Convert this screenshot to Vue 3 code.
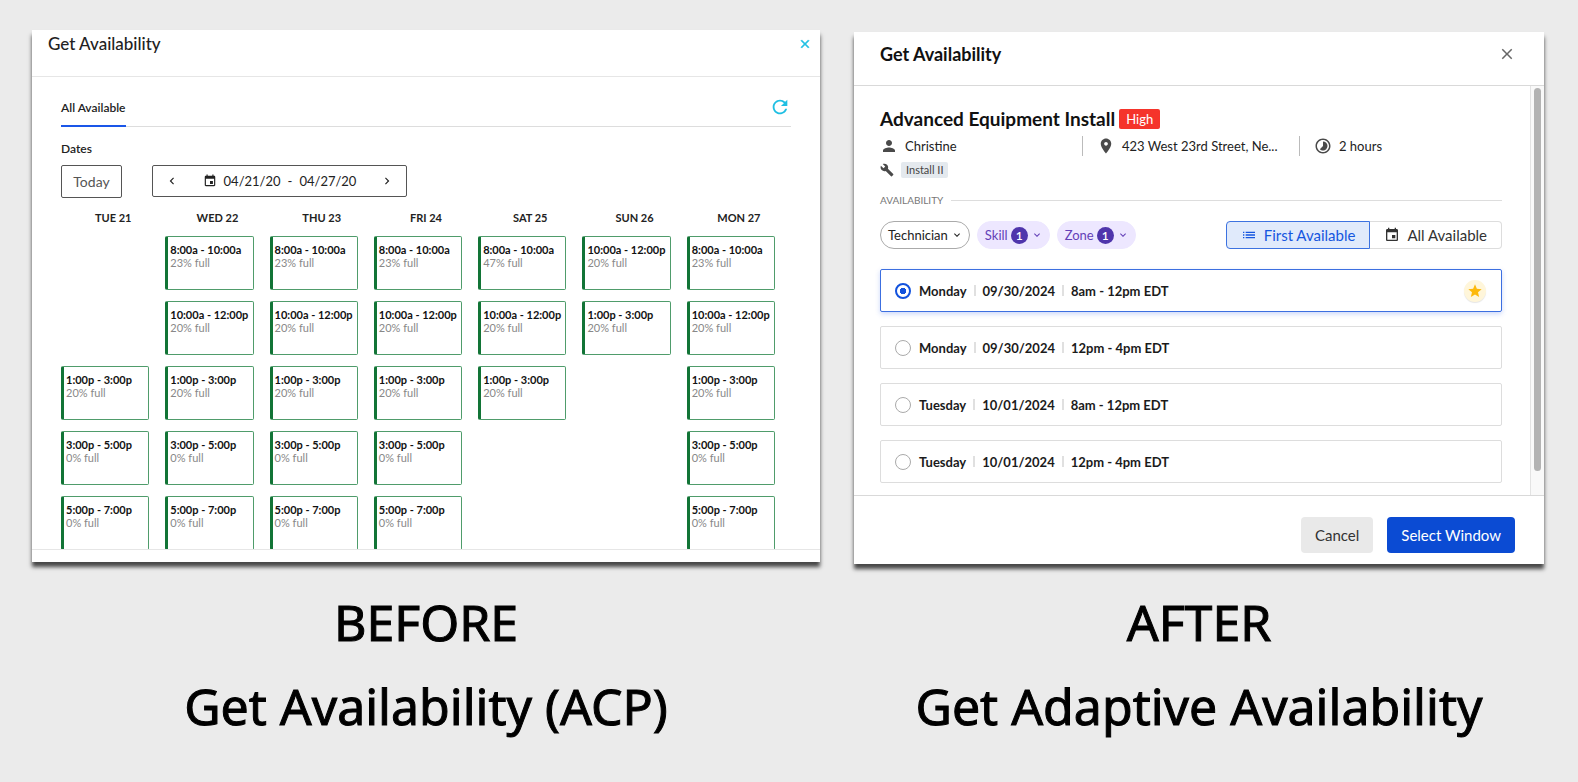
<template>
  <main class="compare">
    <section class="side before">
      <div class="panel">
        <header class="panel-header">
          <h2>Get Availability</h2>
          <button class="icon-button cyan" aria-label="Close">
            <svg viewBox="0 0 24 24" class="icon-14 bold"><path :d="icons.close" /></svg>
          </button>
        </header>

        <div class="panel-body">
          <div class="tabs">
            <button class="tab">All Available</button>
            <button class="icon-button cyan refresh" aria-label="Refresh">
              <svg viewBox="0 0 24 24" class="icon-22"><path :d="icons.refresh" /></svg>
            </button>
          </div>

          <p class="dates-label">Dates</p>
          <div class="dates">
            <button class="today">Today</button>
            <div class="range">
              <button class="icon-button" aria-label="Previous week">
                <svg viewBox="0 0 24 24" class="icon-14"><path :d="icons.left" /></svg>
              </button>
              <div class="range-text">
                <svg viewBox="0 0 24 24" class="icon-14"><path :d="icons.event" /></svg>
                <span>04/21/20</span>
                <span>-</span>
                <span>04/27/20</span>
              </div>
              <button class="icon-button" aria-label="Next week">
                <svg viewBox="0 0 24 24" class="icon-14"><path :d="icons.right" /></svg>
              </button>
            </div>
          </div>

          <div class="calendar">
            <div v-for="day in days" :key="day.name" class="day">
              <h3>{{ day.name }}</h3>
              <template v-for="(slot, index) in day.slots" :key="index">
                <button v-if="slot" class="slot">
                  <strong>{{ slot[0] }}</strong>
                  <span>{{ slot[1] }}% full</span>
                </button>
                <div v-else class="slot-empty"></div>
              </template>
            </div>
          </div>
        </div>
        <footer class="panel-footer"></footer>
      </div>
      <div class="caption">
        <p>BEFORE</p>
        <p>Get Availability (ACP)</p>
      </div>
    </section>

    <section class="side after">
      <div class="panel">
        <header class="panel-header">
          <h2>Get Availability</h2>
          <button class="icon-button gray" aria-label="Close">
            <svg viewBox="0 0 24 24" class="icon-18"><path :d="icons.close" /></svg>
          </button>
        </header>

        <div class="panel-body">
          <div class="content">
            <div class="job-title">
              <h3>Advanced Equipment Install</h3>
              <span class="priority">High</span>
            </div>
            <div class="job-info">
              <div class="info person">
                <svg viewBox="0 0 24 24" class="icon-18"><path :d="icons.person" /></svg>
                <span>Christine</span>
              </div>
              <div class="info place">
                <svg viewBox="0 0 24 24" class="icon-18"><path :d="icons.place" /></svg>
                <span>423 West 23rd Street, Ne...</span>
              </div>
              <div class="info duration">
                <svg viewBox="0 0 24 24" class="icon-18"><path :d="icons.timelapse" /></svg>
                <span>2 hours</span>
              </div>
            </div>
            <div class="job-skill">
              <svg viewBox="0 0 24 24" class="icon-14"><path :d="icons.build" /></svg>
              <span>Install II</span>
            </div>

            <div class="divider">AVAILABILITY</div>

            <div class="toolbar">
              <div class="filters">
                <button
                  v-for="filter in filters"
                  :key="filter.name"
                  :class="['filter', { applied: filter.count }]"
                  aria-haspopup="listbox"
                >
                  {{ filter.name }}
                  <span v-if="filter.count" class="count">{{ filter.count }}</span>
                  <svg viewBox="0 0 24 24" class="icon-12"><path :d="icons.down" /></svg>
                </button>
              </div>
              <div class="views">
                <button
                  v-for="view in views"
                  :key="view.name"
                  :class="['view', { active: activeView === view.name }]"
                  @click="activeView = view.name"
                >
                  <svg viewBox="0 0 24 24" class="icon-16"><path :d="icons[view.icon]" /></svg>
                  {{ view.name }}
                </button>
              </div>
            </div>

            <div class="options">
              <label
                v-for="(option, index) in options"
                :key="index"
                :class="['option', { selected: selected === index }]"
              >
                <input v-model="selected" type="radio" name="window" :value="index" />
                <span>{{ option.day }}</span>
                <i></i>
                <span>{{ option.date }}</span>
                <i></i>
                <span>{{ option.time }}</span>
                <span v-if="option.best" class="star">
                  <svg viewBox="0 0 24 24" class="icon-16"><path :d="icons.star" /></svg>
                </span>
              </label>
            </div>
          </div>
          <div class="scrollbar"><div class="thumb"></div></div>
        </div>

        <footer class="panel-footer">
          <button class="action">Cancel</button>
          <button class="action primary">Select Window</button>
        </footer>
      </div>
      <div class="caption">
        <p>AFTER</p>
        <p>Get Adaptive Availability</p>
      </div>
    </section>
  </main>
</template>

<script setup>
import { ref } from 'vue'

const morning = ['8:00a - 10:00a', 23]
const noon = ['10:00a - 12:00p', 20]
const afternoon = ['1:00p - 3:00p', 20]
const late = ['3:00p - 5:00p', 0]
const evening = ['5:00p - 7:00p', 0]
const fullDay = [morning, noon, afternoon, late, evening]

const days = [
  { name: 'TUE 21', slots: [null, null, afternoon, late, evening] },
  { name: 'WED 22', slots: fullDay },
  { name: 'THU 23', slots: fullDay },
  { name: 'FRI 24', slots: fullDay },
  { name: 'SAT 25', slots: [['8:00a - 10:00a', 47], noon, afternoon] },
  { name: 'SUN 26', slots: [noon, afternoon] },
  { name: 'MON 27', slots: fullDay }
]

const filters = [
  { name: 'Technician', count: 0 },
  { name: 'Skill', count: 1 },
  { name: 'Zone', count: 1 }
]

const views = [
  { name: 'First Available', icon: 'list' },
  { name: 'All Available', icon: 'event' }
]
const activeView = ref('First Available')

const options = [
  { day: 'Monday', date: '09/30/2024', time: '8am - 12pm EDT', best: true },
  { day: 'Monday', date: '09/30/2024', time: '12pm - 4pm EDT' },
  { day: 'Tuesday', date: '10/01/2024', time: '8am - 12pm EDT' },
  { day: 'Tuesday', date: '10/01/2024', time: '12pm - 4pm EDT' }
]
const selected = ref(0)

const icons = {
  close: 'M19 6.41L17.59 5 12 10.59 6.41 5 5 6.41 10.59 12 5 17.59 6.41 19 12 13.41 17.59 19 19 17.59 13.41 12z',
  refresh: 'M17.65 6.35C16.2 4.9 14.21 4 12 4c-4.42 0-7.99 3.58-7.99 8s3.57 8 7.99 8c3.73 0 6.84-2.55 7.73-6h-2.08c-.82 2.33-3.04 4-5.65 4-3.31 0-6-2.69-6-6s2.69-6 6-6c1.66 0 3.14.69 4.22 1.78L13 11h7V4l-2.35 2.35z',
  left: 'M15.41 7.41L14 6l-6 6 6 6 1.41-1.41L10.83 12z',
  right: 'M10 6L8.59 7.41 13.17 12l-4.58 4.59L10 18l6-6z',
  down: 'M7.41 8.59L12 13.17l4.59-4.58L18 10l-6 6-6-6z',
  event: 'M17 12h-5v5h5v-5zM16 1v2H8V1H6v2H5c-1.11 0-1.99.9-1.99 2L3 19c0 1.1.89 2 2 2h14c1.1 0 2-.9 2-2V5c0-1.1-.9-2-2-2h-1V1h-2zm3 18H5V8h14v11z',
  person: 'M12 12c2.21 0 4-1.79 4-4s-1.79-4-4-4-4 1.79-4 4 1.79 4 4 4zm0 2c-2.67 0-8 1.34-8 4v2h16v-2c0-2.66-5.33-4-8-4z',
  place: 'M12 2C8.13 2 5 5.13 5 9c0 5.25 7 13 7 13s7-7.75 7-13c0-3.87-3.13-7-7-7zm0 9.5c-1.38 0-2.5-1.12-2.5-2.5s1.12-2.5 2.5-2.5 2.5 1.12 2.5 2.5-1.12 2.5-2.5 2.5z',
  timelapse: 'M16.24 7.76C15.07 6.59 13.54 6 12 6v6l-4.24 4.24c2.34 2.34 6.14 2.34 8.49 0 2.34-2.34 2.34-6.14-.01-8.48zM12 2C6.48 2 2 6.48 2 12s4.48 10 10 10 10-4.48 10-10S17.52 2 12 2zm0 18c-4.42 0-8-3.58-8-8s3.58-8 8-8 8 3.58 8 8-3.58 8-8 8z',
  build: 'M22.7 19l-9.1-9.1c.9-2.3.4-5-1.5-6.9-2-2-5-2.4-7.4-1.3L9 6 6 9 1.6 4.7C.4 7.1.9 10.1 2.9 12.1c1.9 1.9 4.6 2.4 6.9 1.5l9.1 9.1c.4.4 1 .4 1.4 0l2.3-2.3c.5-.4.5-1.1.1-1.4z',
  list: 'M3 13h2v-2H3v2zm0 4h2v-2H3v2zm0-8h2V7H3v2zm4 4h14v-2H7v2zm0 4h14v-2H7v2zM7 7v2h14V7H7z',
  star: 'M12 17.27L18.18 21l-1.64-7.03L22 9.24l-7.19-.61L12 2 9.19 8.63 2 9.24l5.46 4.73L5.82 21z'
}
</script>

<style>
body {
  background: #ebebeb;
}
</style>

<style scoped>
.compare {
  display: grid;
  grid-template-columns: 788fr 690fr;
  gap: 34px;
  padding: 30px 34px 0 32px;
  font-family: Lato, sans-serif;
  color: #222;
}

.compare * {
  box-sizing: border-box;
}

h2,
h3,
p {
  margin: 0;
}

button {
  padding: 0;
  border: none;
  background: none;
  font: inherit;
  color: inherit;
  cursor: pointer;
}

svg {
  display: block;
  flex: none;
  fill: currentColor;
}

.icon-12 { width: 12px; height: 12px; }
.icon-14 { width: 14px; height: 14px; }
.icon-16 { width: 16px; height: 16px; }
.icon-18 { width: 18px; height: 18px; }
.icon-22 { width: 22px; height: 22px; }

.bold {
  stroke: currentColor;
  stroke-width: 1;
}

.cyan { color: #1fbfe3; }
.gray { color: #666; }

.side {
  min-width: 0;
}

.panel {
  background: #fff;
  box-shadow: 0 5px 4px rgba(0, 0, 0, 0.7);
}

.panel-header {
  display: flex;
  justify-content: space-between;
  border-bottom: 1px solid #e6e6e6;
}

.caption {
  padding-top: 18px;
  font-family: "Noto Sans", sans-serif;
  font-size: 50px;
  line-height: 84px;
  text-align: center;
  white-space: nowrap;
  color: #000;
  -webkit-text-stroke: 1px #000;
}

/* Before */
.before .panel-header {
  height: 47px;
  padding: 4px 8px 0 16px;
}

.before h2 {
  font-size: 17px;
  line-height: 20px;
  font-weight: 500;
}

.before .icon-button {
  align-self: flex-start;
}

.before .panel-header .icon-button {
  padding: 3px 0;
}

.before .panel-body {
  height: 472px;
  padding: 19px 29px 0;
  overflow: hidden;
}

.tabs {
  display: flex;
  justify-content: space-between;
  height: 31px;
  border-bottom: 1px solid #ddd;
}

.tab {
  height: 31px;
  padding-bottom: 6px;
  border-bottom: 2px solid #1a56e8;
  font-size: 12px;
  font-weight: 600;
}

.before .refresh {
  align-self: flex-start;
}

.dates-label {
  padding: 14px 0 8px;
  font-size: 12px;
  line-height: 16px;
  font-weight: 600;
}

.dates {
  display: flex;
  align-items: flex-start;
  gap: 30px;
}

.today,
.range {
  height: 33px;
  border: 1px solid #555;
  border-radius: 2px;
}

.today {
  width: 61px;
  font-size: 14px;
  color: #555;
}

.range {
  display: flex;
  align-items: center;
  justify-content: space-between;
  width: 255px;
  height: 32px;
  padding: 0 12px;
  font-size: 13px;
}

.before .range .icon-button {
  align-self: center;
}

.range-text {
  display: flex;
  align-items: center;
  gap: 7px;
}

.calendar {
  display: grid;
  grid-template-columns: repeat(7, 1fr);
  padding-top: 13px;
}

.day {
  display: flex;
  flex-direction: column;
  gap: 11px;
}

.day h3 {
  font-size: 11px;
  line-height: 14px;
  font-weight: 700;
  text-align: center;
}

.slot,
.slot-empty {
  height: 54px;
  margin-right: 16px;
}

.slot {
  display: flex;
  flex-direction: column;
  padding: 6px 0 0 2px;
  border: 1px solid #4f9c6b;
  border-left: 3px solid #127436;
  border-radius: 2px;
  font-size: 11px;
  line-height: 13px;
  text-align: left;
  white-space: nowrap;
}

.slot strong {
  font-weight: 700;
  color: #111;
}

.slot span {
  color: #888;
}

.before .panel-footer {
  height: 13px;
  border-top: 1px solid #e6e6e6;
}

/* After */
.after .panel {
  margin-top: 2px;
}

.after .caption {
  padding-top: 16px;
}

.after .panel-header {
  align-items: center;
  height: 54px;
  padding: 0 28px 10px 26px;
  border-color: #d9d9d9;
}

.after h2,
.after h3 {
  font-size: 18px;
  line-height: 24px;
  font-weight: 700;
  color: #111;
}

.after h3 {
  font-size: 19px;
}

.after .panel-body {
  display: flex;
}

.content {
  flex: 1;
  min-width: 0;
  padding: 21px 28px 12px 26px;
}

.job-title {
  display: flex;
  align-items: center;
  gap: 4px;
}

.priority {
  height: 20px;
  padding: 0 7px;
  border-radius: 2px;
  background: #f5342b;
  font-size: 13px;
  line-height: 20px;
  color: #fff;
}

.job-info {
  display: flex;
  padding-top: 5px;
  font-size: 13px;
  line-height: 20px;
}

.info {
  display: flex;
  align-items: center;
  gap: 7px;
  white-space: nowrap;
}

.info svg,
.job-skill svg {
  color: #4a4a4a;
}

.info + .info {
  padding-left: 14px;
  border-left: 1px solid #bbb;
}

.person {
  width: 202px;
}

.place {
  width: 217px;
}

.job-skill {
  display: flex;
  align-items: center;
  gap: 7px;
  padding-top: 6px;
}

.job-skill span {
  padding: 0 5px;
  border-radius: 2px;
  background: #e4e9ee;
  font-size: 11px;
  line-height: 16px;
  color: #444;
}

.divider {
  display: flex;
  align-items: center;
  gap: 8px;
  padding-top: 14px;
  font-size: 10px;
  line-height: 16px;
  color: #777;
}

.divider::after {
  content: '';
  flex: 1;
  border-top: 1px solid #ddd;
}

.toolbar {
  display: flex;
  justify-content: space-between;
  padding: 13px 0 20px;
}

.filters {
  display: flex;
  gap: 7px;
}

.filter {
  display: flex;
  align-items: center;
  gap: 3px;
  height: 28px;
  padding: 0 6px 0 7px;
  border: 1px solid #aaa;
  border-radius: 14px;
  font-size: 13px;
}

.filter.applied {
  border-color: #ede7ff;
  background: #ede7ff;
  color: #6440b8;
}

.count {
  width: 17px;
  height: 17px;
  border-radius: 50%;
  background: #4f35ac;
  font-size: 12px;
  line-height: 17px;
  font-weight: 600;
  text-align: center;
  color: #fff;
}

.views {
  display: flex;
}

.view {
  display: flex;
  align-items: center;
  gap: 7px;
  height: 28px;
  padding: 0 14px;
  border: 1px solid #ddd;
  border-left: none;
  border-radius: 0 4px 4px 0;
  font-size: 15px;
  color: #333;
}

.view:first-child {
  border-left: 1px solid #ddd;
  border-radius: 4px 0 0 4px;
}

.view.active {
  border-color: #3c72e0;
  background: #e0eafb;
  color: #1556e0;
}

.options {
  display: flex;
  flex-direction: column;
  gap: 14px;
}

.option {
  display: flex;
  align-items: center;
  height: 43px;
  padding: 0 15px 0 14px;
  border: 1px solid #ddd;
  border-radius: 2px;
  font-size: 13px;
  font-weight: 700;
  color: #1b1b1b;
}

.option.selected {
  border-color: #3c6fe0;
  box-shadow: 0 2px 5px rgba(50, 100, 240, 0.25);
}

.option input {
  appearance: none;
  width: 16px;
  height: 16px;
  margin: 0 8px 0 0;
  border: 1px solid #aaa;
  border-radius: 50%;
}

.option input:checked {
  border: 2px solid #1252dd;
  background: radial-gradient(circle, #1252dd 0 3px, #fff 3px);
}

.option i {
  width: 2px;
  height: 11px;
  margin: 0 7px;
  background: #e0e0e0;
}

.star {
  display: grid;
  place-items: center;
  width: 22px;
  height: 22px;
  margin-left: auto;
  border-radius: 50%;
  background: #fff6da;
  box-shadow: 0 1px 1px #e5e5e5;
  color: #fdb90b;
}

.scrollbar {
  width: 14px;
  padding: 2px 3px 24px;
  border-left: 1px solid #e3e3e3;
  background: #f9f9f9;
}

.thumb {
  width: 7px;
  height: 100%;
  border-radius: 4px;
  background: #b3b3b3;
}

.after .panel-footer {
  display: flex;
  justify-content: flex-end;
  gap: 14px;
  padding: 21px 29px 11px;
  border-top: 1px solid #d9d9d9;
}

.action {
  height: 36px;
  padding: 0 14px;
  border-radius: 4px;
  background: #e9e9e9;
  font-size: 15px;
  color: #333;
}

.action.primary {
  background: #0b4bd3;
  color: #fff;
}
</style>
